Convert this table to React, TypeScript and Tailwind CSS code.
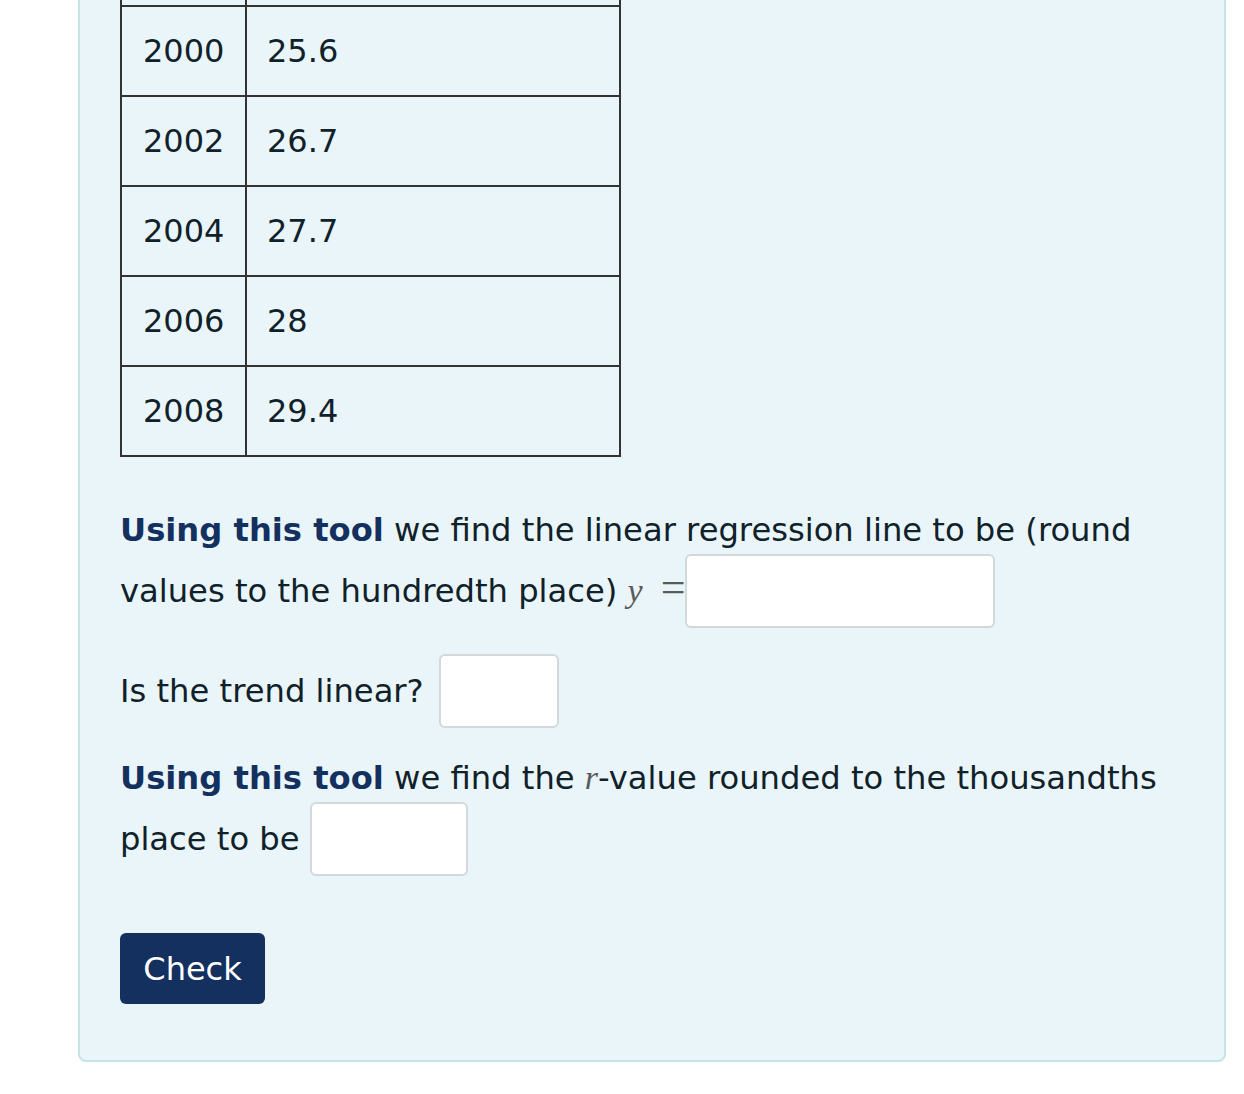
import React from "react";

const rows: [string, string][] = [
  ["", ""],
  ["2000", "25.6"],
  ["2002", "26.7"],
  ["2004", "27.7"],
  ["2006", "28"],
  ["2008", "29.4"],
];

function MathVar({ v }: { v: string }) {
  return (
    <span
      className="italic text-[#5a5a5a] text-[34px]"
      style={{ fontFamily: '"Liberation Serif", "DejaVu Serif", serif' }}
    >
      {v}
    </span>
  );
}

const inputCls =
  "inline-block align-[-26px] h-[74px] bg-white border-2 border-[#d3d8db] rounded-[6px]";

export default function App() {
  return (
    <div
      className="min-h-[1094px] bg-white text-[#10212a] text-[32px]"
      style={{ fontFamily: '"DejaVu Sans", Verdana, sans-serif' }}
    >
      <div className="ml-[78px] mr-[18px] mt-[-127px] border-2 border-[#c6e3ea] bg-[#e9f5f8] rounded-b-[8px] pt-[40px] pl-[40px] pr-[40px] pb-[56px]">
        <div className="w-[501px] border-l-2 border-r-2 border-t-2 border-[#333]">
          {rows.map(([a, b], i) => (
            <div key={i} className="flex h-[90px] border-b-2 border-[#333]">
              <div className="w-[125px] border-r-2 border-[#333] pl-[21px] flex items-center">
                {a}
              </div>
              <div className="flex-1 pl-[20px] flex items-center">{b}</div>
            </div>
          ))}
        </div>

        <div className="text-[32.2px]">
          <p className="mt-[49px] leading-[48px]">
            <span className="font-bold text-[#13305f]">Using this tool</span> we find the linear regression line to be (round
            values to the hundredth place) <MathVar v="y" />
            <span
              className="text-[#5a5a5a] text-[44px] leading-none ml-[18px]"
              style={{ fontFamily: '"Liberation Serif", "DejaVu Serif", serif' }}
            >
              =
            </span>
            <span className={inputCls + " w-[310px]"} />
          </p>

          <p className="mt-[26px] leading-[48px]">
            Is the trend linear?<span className="inline-block w-[15px]" />
            <span className={inputCls + " w-[120px]"} />
          </p>

          <p className="mt-[26px] leading-[48px]">
            <span className="font-bold text-[#13305f]">Using this tool</span> we find the <MathVar v="r" />-value rounded to the thousandths
            place to be <span className={inputCls + " w-[158px]"} />
          </p>
        </div>

        <button className="mt-[57px] block w-[145px] h-[71px] bg-[#13305f] text-white rounded-[6px] text-[32px] leading-none">
          Check
        </button>
      </div>
    </div>
  );
}
